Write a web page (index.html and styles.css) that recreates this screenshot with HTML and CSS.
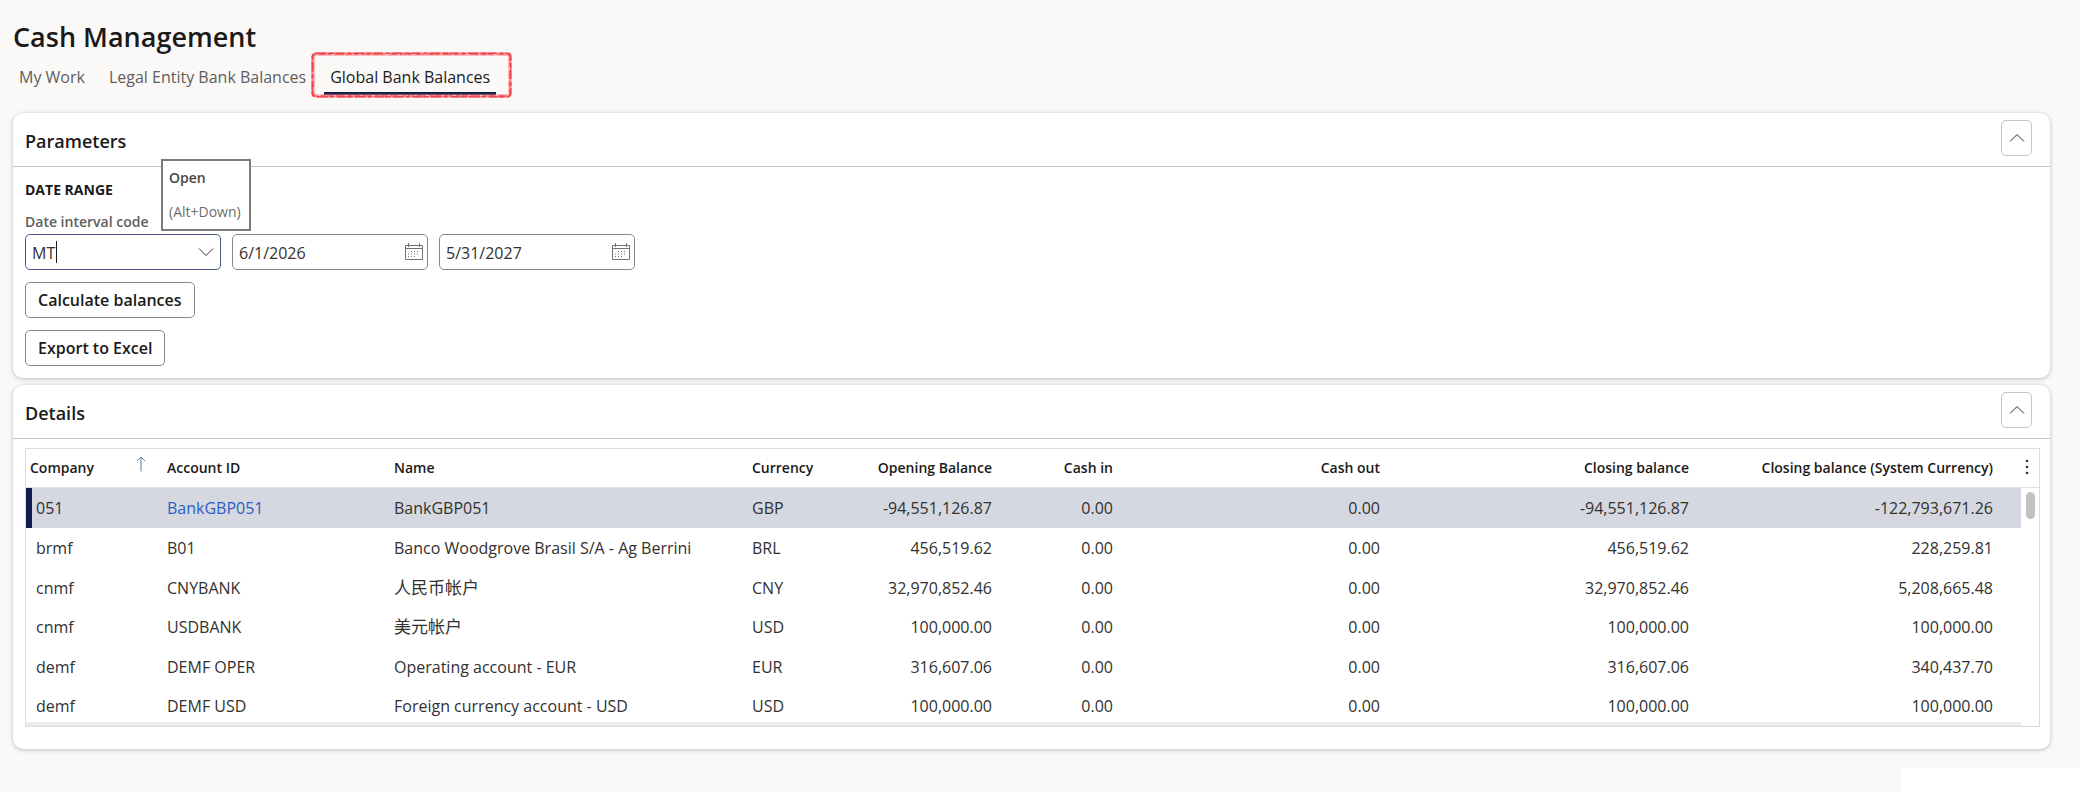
FILE: index.html
```
<!DOCTYPE html>
<html lang="en">
<head>
    <meta charset="UTF-8">
    <meta name="viewport" content="width=device-width, initial-scale=1.0">
    <title>Cash Management</title>
    <link rel="stylesheet" href="styles.css">
</head>
<body>
    <main class="page">
        <h1>Cash Management</h1>

        <nav class="tabs">
            <a class="tab" href="#my-work">My Work</a>
            <a class="tab" href="#legal-entity">Legal Entity Bank Balances</a>
            <a class="tab active" href="#global">Global Bank Balances
                <svg class="marker" viewBox="0 0 201 46" aria-hidden="true">
                    <rect class="marker-base" x="2" y="2" width="197" height="42" rx="3"/>
                    <rect class="marker-rough" x="1.500" y="1.500" width="198" height="43" rx="3"/>
                    <rect class="marker-light" x="2.500" y="2.500" width="196" height="41" rx="3"/>
                </svg>
            </a>
        </nav>

        <section class="card">
            <header class="card-header">
                <h2>Parameters</h2>
                <button class="collapse" type="button" aria-label="Collapse Parameters">
                    <svg width="16" height="10" viewBox="0 0 16 10"><path d="M1 8.5 8 1.5l7 7"/></svg>
                </button>
            </header>
            <div class="params">
                <h3>DATE RANGE</h3>
                <label class="label" for="interval">Date interval code</label>
                <div class="fields">
                    <div class="field focused">
                        <input id="interval" type="text" value="MT">
                        <span class="caret"></span>
                        <button class="icon-btn" type="button" aria-label="Open">
                            <svg width="16" height="10" viewBox="0 0 16 10"><path d="m1 1.5 7 7 7-7"/></svg>
                        </button>
                        <div class="tooltip" role="tooltip">
                            <strong>Open</strong>
                            <span>(Alt+Down)</span>
                        </div>
                    </div>
                    <div class="field">
                        <input type="text" value="6/1/2026" aria-label="From date">
                        <button class="icon-btn calendar" type="button" aria-label="Pick from date">
                            <svg width="18" height="18" viewBox="0 0 18 18">
                                <path d="M.5 2.500h17v14H.5zM.5 5.500h17M3.500 0v4M14.500 0v4"/>
                                <path class="days" d="M6 8.5h9M3 11h12M3 13.500h9"/>
                            </svg>
                        </button>
                    </div>
                    <div class="field">
                        <input type="text" value="5/31/2027" aria-label="To date">
                        <button class="icon-btn calendar" type="button" aria-label="Pick to date">
                            <svg width="18" height="18" viewBox="0 0 18 18">
                                <path d="M.5 2.500h17v14H.5zM.5 5.500h17M3.500 0v4M14.500 0v4"/>
                                <path class="days" d="M6 8.5h9M3 11h12M3 13.500h9"/>
                            </svg>
                        </button>
                    </div>
                </div>
                <button class="btn" type="button">Calculate balances</button>
                <button class="btn" type="button">Export to Excel</button>
            </div>
        </section>

        <section class="card">
            <header class="card-header">
                <h2>Details</h2>
                <button class="collapse" type="button" aria-label="Collapse Details">
                    <svg width="16" height="10" viewBox="0 0 16 10"><path d="M1 8.5 8 1.5l7 7"/></svg>
                </button>
            </header>
            <div class="details">
                <div class="grid">
                    <table>
                        <colgroup>
                            <col class="c-company">
                            <col class="c-account">
                            <col class="c-name">
                            <col class="c-currency">
                            <col class="c-opening">
                            <col class="c-in">
                            <col class="c-out">
                            <col class="c-closing">
                            <col>
                            <col class="c-menu">
                        </colgroup>
                        <thead>
                            <tr>
                                <th>
                                    <div class="sorted">Company
                                        <svg width="10" height="16" viewBox="0 0 10 16"><path d="M5 15.500V1M1 5l4-4 4 4"/></svg>
                                    </div>
                                </th>
                                <th>Account ID</th>
                                <th>Name</th>
                                <th>Currency</th>
                                <th class="num">Opening Balance</th>
                                <th class="num">Cash in</th>
                                <th class="num">Cash out</th>
                                <th class="num">Closing balance</th>
                                <th class="num last">Closing balance (System Currency)</th>
                                <th class="menu">
                                    <button class="more" type="button" aria-label="Grid options">
                                        <svg width="4" height="16" viewBox="0 0 4 16"><circle cx="2" cy="2" r="1.300"/><circle cx="2" cy="8" r="1.300"/><circle cx="2" cy="14" r="1.300"/></svg>
                                    </button>
                                </th>
                            </tr>
                        </thead>
                        <tbody>
                            <tr class="selected">
                                <td>051</td>
                                <td><a href="#account">BankGBP051</a></td>
                                <td>BankGBP051</td>
                                <td>GBP</td>
                                <td class="num">-94,551,126.87</td>
                                <td class="num">0.00</td>
                                <td class="num">0.00</td>
                                <td class="num">-94,551,126.87</td>
                                <td class="num last">-122,793,671.26</td>
                                <td class="menu"></td>
                            </tr>
                            <tr>
                                <td>brmf</td>
                                <td>B01</td>
                                <td>Banco Woodgrove Brasil S/A - Ag Berrini</td>
                                <td>BRL</td>
                                <td class="num">456,519.62</td>
                                <td class="num">0.00</td>
                                <td class="num">0.00</td>
                                <td class="num">456,519.62</td>
                                <td class="num last">228,259.81</td>
                                <td class="menu"></td>
                            </tr>
                            <tr>
                                <td>cnmf</td>
                                <td>CNYBANK</td>
                                <td class="zh" lang="zh-CN">人民币帐户</td>
                                <td>CNY</td>
                                <td class="num">32,970,852.46</td>
                                <td class="num">0.00</td>
                                <td class="num">0.00</td>
                                <td class="num">32,970,852.46</td>
                                <td class="num last">5,208,665.48</td>
                                <td class="menu"></td>
                            </tr>
                            <tr>
                                <td>cnmf</td>
                                <td>USDBANK</td>
                                <td class="zh" lang="zh-CN">美元帐户</td>
                                <td>USD</td>
                                <td class="num">100,000.00</td>
                                <td class="num">0.00</td>
                                <td class="num">0.00</td>
                                <td class="num">100,000.00</td>
                                <td class="num last">100,000.00</td>
                                <td class="menu"></td>
                            </tr>
                            <tr>
                                <td>demf</td>
                                <td>DEMF OPER</td>
                                <td>Operating account - EUR</td>
                                <td>EUR</td>
                                <td class="num">316,607.06</td>
                                <td class="num">0.00</td>
                                <td class="num">0.00</td>
                                <td class="num">316,607.06</td>
                                <td class="num last">340,437.70</td>
                                <td class="menu"></td>
                            </tr>
                            <tr>
                                <td>demf</td>
                                <td>DEMF USD</td>
                                <td>Foreign currency account - USD</td>
                                <td>USD</td>
                                <td class="num">100,000.00</td>
                                <td class="num">0.00</td>
                                <td class="num">0.00</td>
                                <td class="num">100,000.00</td>
                                <td class="num last">100,000.00</td>
                                <td class="menu"></td>
                            </tr>
                        </tbody>
                    </table>
                    <div class="scroll-thumb"></div>
                    <div class="scroll-shade"></div>
                </div>
            </div>
        </section>
    </main>
    <div class="corner"></div>
</body>
</html>
```
FILE: styles.css
```
* {
    box-sizing: border-box;
}
body {
    margin: 0;
    min-height: 100vh;
    background: #faf9f8;
    color: #323130;
    font-family: "Open Sans", "Noto Sans", "Noto Sans CJK SC", sans-serif;
    font-size: 16px;
    line-height: 24px;
}
.page {
    padding: 16px 30px 0 13px;
}
h1, h2, h3 {
    margin: 0;
    color: #1b1a19;
    font-weight: 600;
}
h1 {
    font-size: 27px;
    line-height: 42px;
}
h2 {
    font-size: 18px;
}
h3 {
    font-size: 14px;
    font-weight: 700;
}
a {
    color: #2b5fc1;
    text-decoration: none;
}
svg {
    display: block;
    fill: none;
    stroke: #323130;
    stroke-width: 1;
}

/* tabs */
.tabs {
    display: flex;
    gap: 12px;
    height: 55px;
    padding-top: 7px;
}
.tab {
    position: relative;
    height: 30px;
    padding: 0 6px;
    color: #605e5c;
}
.tab.active {
    color: #1b1a19;
    border-bottom: 3px solid #16204e;
}
.marker {
    position: absolute;
    top: -13px;
    left: -13px;
    width: 201px;
    height: 46px;
}
.marker-base {
    stroke: #f98286;
    stroke-width: 3;
}
.marker-rough {
    stroke: #f0444b;
    stroke-width: 2;
    stroke-dasharray: 11 2 6 1 9 3 4 2;
}
.marker-light {
    stroke: #fcc4c4;
    stroke-dasharray: 2 7 1 5 3 9;
}

/* cards */
.card {
    margin-bottom: 7px;
    background: #fff;
    border-radius: 10px;
    box-shadow: 0 1px 4px rgba(0, 0, 0, 0.25);
}
.card-header {
    display: flex;
    justify-content: space-between;
    align-items: flex-start;
    height: 54px;
    padding: 7px 18px 0 12px;
    border-bottom: 1px solid #c8c6c4;
}
.card-header h2 {
    padding-top: 9px;
}
.collapse {
    display: flex;
    align-items: center;
    justify-content: center;
    width: 31px;
    height: 36px;
    padding: 0;
    background: #fff;
    border: 1px solid #c8c6c4;
    border-radius: 5px;
}
.params {
    display: flex;
    flex-direction: column;
    align-items: flex-start;
    padding: 11px 12px 12px;
}
.label {
    margin-top: 8px;
    color: #605e5c;
    font-size: 14px;
    font-weight: 600;
}
.fields {
    display: flex;
    gap: 11px;
}
.field {
    position: relative;
    display: flex;
    align-items: center;
    width: 196px;
    height: 36px;
    border: 1px solid #8a8886;
    border-radius: 5px;
}
.field.focused {
    border-color: #4a5688;
}
.field input {
    flex: 1;
    min-width: 0;
    padding: 2px 6px 0;
    border: 0;
    outline: 0;
    background: none;
    color: #323130;
    font: inherit;
}
.icon-btn {
    padding: 0 6px;
    border: 0;
    background: none;
}
.calendar {
    padding: 0 4px;
}
.calendar svg {
    stroke: #6b7477;
}
.calendar .days {
    stroke-dasharray: 1 2;
}
.caret {
    position: absolute;
    top: 6px;
    left: 30px;
    width: 1px;
    height: 22px;
    background: #1b1a19;
}
.tooltip {
    position: absolute;
    left: 135px;
    bottom: 38px;
    display: flex;
    flex-direction: column;
    gap: 10px;
    padding: 5px 8px 5px 6px;
    background: #fff;
    border: 2px solid #7a7a7a;
    color: #6e6c6a;
    font-size: 14px;
}
.tooltip strong {
    color: #484644;
    font-weight: 600;
}
.btn {
    height: 36px;
    margin-top: 12px;
    padding: 0 12px;
    background: #fff;
    border: 1px solid #8a8886;
    border-radius: 5px;
    color: #1b1a19;
    font: inherit;
    font-weight: 600;
}

/* grid */
.details {
    padding: 9px 10px 22px 12px;
}
.grid {
    position: relative;
    border: 1px solid #dddcdb;
}
table {
    width: 100%;
    table-layout: fixed;
    border-collapse: separate;
    border-spacing: 0;
}
th, td {
    padding: 0 8px;
    text-align: left;
    white-space: nowrap;
}
th {
    height: 39px;
    color: #1b1a19;
    font-size: 14px;
    font-weight: 600;
    border-bottom: 1px solid #e1dfdd;
}
th:first-child {
    padding-left: 4px;
}
tbody tr {
    height: 40px;
}
tbody tr:nth-child(2n+3) {
    height: 39px;
}
td:first-child {
    padding-left: 10px;
}
.num {
    text-align: right;
}
.last {
    padding-right: 28px;
}
.menu {
    padding: 0;
}
.zh {
    font-size: 17px;
}
.selected {
    background: #d5d8e0;
}
.selected td:first-child {
    padding-left: 4px;
    border-left: 6px solid #0f1c4d;
}
.selected .menu {
    background: #fff;
}
.sorted {
    display: flex;
    justify-content: space-between;
    padding-right: 5px;
}
.sorted svg {
    stroke: #5b7f9c;
}
.more {
    padding: 4px;
    border: 0;
    background: none;
}
.more svg {
    fill: #323130;
    stroke: none;
}
.c-company { width: 133px; }
.c-account { width: 227px; }
.c-name { width: 358px; }
.c-currency { width: 108px; }
.c-opening { width: 148px; }
.c-in { width: 121px; }
.c-out { width: 267px; }
.c-closing { width: 309px; }
.c-menu { width: 18px; }
.scroll-thumb {
    position: absolute;
    top: 43px;
    right: 4px;
    width: 9px;
    height: 27px;
    background: #c2c2c2;
    border-radius: 5px;
}
.scroll-shade {
    position: absolute;
    right: 18px;
    bottom: 0;
    left: 0;
    height: 4px;
    background: #ececec;
}
.corner {
    position: absolute;
    right: 0;
    bottom: 0;
    width: 179px;
    height: 24px;
    background: #fff;
}
```
